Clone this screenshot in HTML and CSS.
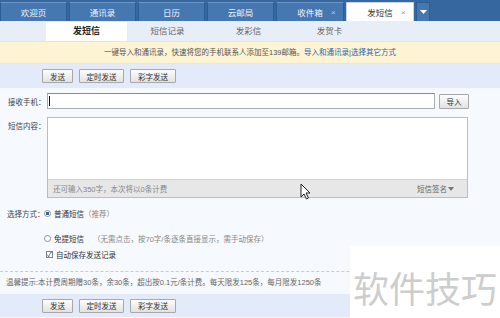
FILE: index.html
```html
<!DOCTYPE html>
<html lang="zh-CN">
<head>
    <meta charset="UTF-8">
    <title>发短信</title>
    <link rel="stylesheet" href="styles.css">
</head>
<body>
    <div class="page">
        <div class="topbar">
            <div class="tab">欢迎页</div>
            <div class="tab">通讯录</div>
            <div class="tab">日历</div>
            <div class="tab">云邮局</div>
            <div class="tab tab-close"><span class="tab-text">收件箱</span><span class="x">×</span></div>
            <div class="tab tab-close active"><span class="tab-text">发短信</span><span class="x">×</span></div>
            <div class="tab-more">
                <svg width="7" height="4" viewBox="0 0 7 4"><path d="M0 0H7L3.5 4Z" fill="#fff"/></svg>
            </div>
        </div>

        <div class="subbar">
            <div class="subtab active">发短信</div>
            <div class="subtab">短信记录</div>
            <div class="subtab">发彩信</div>
            <div class="subtab">发贺卡</div>
        </div>

        <div class="notice">
            一键导入和通讯录，快速将您的手机联系人添加至139邮箱。<a href="#">导入和通讯录</a>|<a href="#">选择其它方式</a>
        </div>

        <div class="actions">
            <button class="btn btn-send">发送</button>
            <button class="btn btn-timer">定时发送</button>
            <button class="btn btn-color">彩字发送</button>
        </div>

        <div class="form">
            <div class="row row-phone">
                <div class="label">接收手机：</div>
                <div class="phone"><span class="caret"></span></div>
                <button class="btn btn-import">导入</button>
            </div>

            <div class="row row-content">
                <div class="label">短信内容：</div>
                <div class="editor">
                    <div class="editor-body"></div>
                    <div class="editor-foot">
                        <span>还可输入350字，本次将以0条计费</span>
                        <span class="sign">短信签名<svg width="6" height="4" viewBox="0 0 6 4"><path d="M0 0H6L3 4Z" fill="#777"/></svg></span>
                    </div>
                </div>
            </div>

            <div class="row row-mode">
                <div class="label">选择方式：</div>
                <span class="radio on"></span>
                <span>普通短信</span><span class="muted">（推荐）</span>
            </div>

            <div class="row row-mode row-free">
                <div class="label"></div>
                <span class="radio"></span>
                <span>免提短信</span><span class="muted hint">（无需点击，按70字/条逐条直接显示，需手动保存）</span>
            </div>

            <div class="row row-save">
                <span class="check">✓</span>
                <span>自动保存发送记录</span>
            </div>
        </div>

        <div class="tip">温馨提示:本计费周期赠30条，余30条，超出按0.1元/条计费。每天限发125条，每月限发1250条</div>

        <div class="actions actions-bottom">
            <button class="btn btn-send">发送</button>
            <button class="btn btn-timer">定时发送</button>
            <button class="btn btn-color">彩字发送</button>
        </div>

        <div class="watermark">软件技巧</div>

        <svg class="cursor" width="11" height="17" viewBox="0 0 11 17">
            <path d="M1 1V14L4 11L6.5 16L8.5 15L6 10H10Z" fill="#fff" stroke="#222" stroke-width="1" stroke-linejoin="round"/>
        </svg>
    </div>
</body>
</html>
```

FILE: styles.css
```css
body {
    margin: 0;
    font-family: 'Liberation Sans', 'Noto Sans CJK SC', sans-serif;
    font-size: 7.5px;
    color: #333;
    background: #f6f9fd;
}
.page {
    position: relative;
    width: 500px;
    height: 318px;
    overflow: hidden;
}

/* top tabs */
.topbar {
    height: 21px;
    background: #36679e;
    display: flex;
    align-items: flex-end;
    gap: 2px;
}
.tab {
    width: 67px;
    height: 19px;
    box-sizing: border-box;
    background: #4777b0;
    border: 1px solid #2f5c92;
    border-top-color: #6b95c7;
    border-bottom: none;
    color: #eef3fa;
    font-size: 8.5px;
    display: flex;
    align-items: center;
    justify-content: center;
}
.tab-close {
    width: 68px;
    padding-left: 12px;
}
.tab-text {
    flex: 1;
    text-align: center;
}
.x {
    width: 12px;
    color: #b9cbe2;
    font-size: 8px;
}
.tab.active {
    background: #fff;
    border-color: #c9d6e8;
    color: #333;
}
.tab.active .x {
    color: #999;
}
.tab-more {
    width: 14px;
    height: 19px;
    box-sizing: border-box;
    background: #4777b0;
    border: 1px solid #2f5c92;
    border-bottom: none;
    display: flex;
    align-items: center;
    justify-content: center;
}

/* sub tabs */
.subbar {
    height: 20px;
    background: #e8eef8;
    display: flex;
    align-items: flex-end;
    padding-left: 46px;
}
.subtab {
    width: 81px;
    height: 19px;
    line-height: 19px;
    text-align: center;
    color: #666;
    font-size: 8.5px;
}
.subtab.active {
    background: #fff;
    color: #222;
    font-weight: bold;
    font-size: 9px;
}

.notice {
    height: 21px;
    line-height: 21px;
    background: #fdf4d4;
    border-top: 1px solid #f6e5a8;
    border-bottom: 1px solid #f3e6bb;
    text-align: center;
    color: #555;
}
.notice a {
    color: #2d63b0;
    text-decoration: none;
}

/* buttons bar */
.actions {
    height: 24px;
    background: #e3ebfa;
    display: flex;
    align-items: center;
    gap: 6px;
    padding-left: 42px;
}
.btn {
    height: 14px;
    padding: 0;
    box-sizing: border-box;
    border: 1px solid #a8a8a8;
    border-radius: 1px;
    background: linear-gradient(#fdfdfd, #e2e2e2);
    font-family: inherit;
    font-size: 7.5px;
    color: #333;
}
.btn-send { width: 31px; }
.btn-timer { width: 45px; }
.btn-color { width: 46px; }

/* form */
.form {
    padding-top: 5px;
}
.row {
    display: flex;
    align-items: center;
}
.label {
    flex-shrink: 0;
    width: 39px;
    padding-left: 8px;
    color: #444;
    white-space: nowrap;
}
.phone {
    width: 388px;
    height: 16px;
    box-sizing: border-box;
    background: #fff;
    border: 1px solid #a9aeb5;
    border-top-color: #868c95;
    display: flex;
    align-items: center;
    padding-left: 1px;
}
.caret {
    width: 1px;
    height: 10px;
    background: #111;
}
.btn-import {
    width: 30px;
    height: 15px;
    margin-left: 4px;
}

.row-content {
    align-items: flex-start;
    margin-top: 8px;
}
.row-content .label {
    padding-top: 3px;
}
.editor {
    width: 421px;
    height: 81px;
    box-sizing: border-box;
    border: 1px solid #b9bec5;
    background: #fff;
    display: flex;
    flex-direction: column;
}
.editor-body {
    flex: 1;
}
.editor-foot {
    height: 17px;
    background: #e7e7e7;
    border-top: 1px solid #d3d3d3;
    display: flex;
    align-items: center;
    justify-content: space-between;
    padding: 0 13px 0 5px;
    color: #888;
}
.sign {
    color: #666;
    display: flex;
    align-items: center;
    gap: 1px;
}

.row-mode {
    margin-top: 10px;
    height: 11px;
}
.row-mode .label {
    width: 37px;
    padding-left: 7px;
}
.row-free {
    margin-top: 14px;
}
.radio {
    flex-shrink: 0;
    width: 7px;
    height: 7px;
    box-sizing: border-box;
    border: 1px solid #8d939b;
    border-radius: 50%;
    background: #fff;
    margin-right: 3px;
}
.radio.on {
    background: radial-gradient(circle, #3b5f8c 0, #3b5f8c 1.6px, #fff 2px);
}
.muted {
    color: #888;
}
.hint {
    margin-left: 9px;
}
.row-save {
    margin-top: 5px;
    padding-left: 46px;
    height: 10px;
}
.check {
    width: 7px;
    height: 7px;
    box-sizing: border-box;
    border: 1px solid #7d838b;
    background: #fff;
    font-size: 7px;
    line-height: 5px;
    text-align: center;
    color: #1d3d6a;
    margin-right: 3px;
}

.tip {
    margin-top: 12px;
    border-top: 1px dashed #c6cdd8;
    height: 22px;
    line-height: 22px;
    padding-left: 6px;
    color: #666;
}
.actions-bottom {
    height: 23px;
}

/* overlays */
.watermark {
    position: absolute;
    left: 350px;
    top: 246px;
    width: 150px;
    height: 72px;
    background: #fff;
    color: #cdcdcd;
    font-family: 'Noto Sans CJK SC', sans-serif;
    font-size: 36px;
    display: flex;
    align-items: center;
    justify-content: center;
    padding-top: 10px;
    box-sizing: border-box;
}
.cursor {
    position: absolute;
    left: 300px;
    top: 183px;
}
```
